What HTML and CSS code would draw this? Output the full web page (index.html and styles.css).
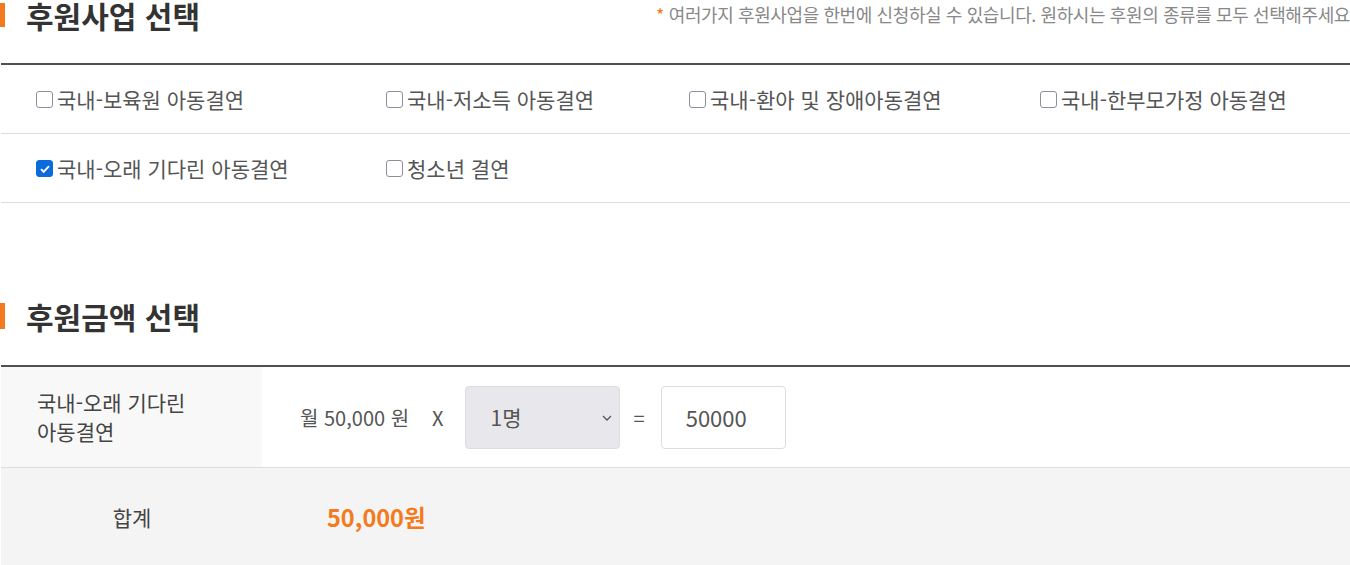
FILE: index.html
```html
<!DOCTYPE html>
<html lang="ko">
<head>
    <meta charset="UTF-8">
    <meta name="viewport" content="width=device-width, initial-scale=1.0">
    <title>후원 신청</title>
    <link rel="stylesheet" href="styles.css">
</head>
<body>
    <!-- 후원사업 선택 -->
    <div class="section-head">
        <h2 class="section-title">후원사업 선택</h2>
        <p class="section-note"><span class="star">*</span> 여러가지 후원사업을 한번에 신청하실 수 있습니다. 원하시는 후원의 종류를 모두 선택해주세요</p>
    </div>
    <div class="program-list">
        <div class="program-row">
            <label class="program"><input type="checkbox">국내-보육원 아동결연</label>
            <label class="program"><input type="checkbox">국내-저소득 아동결연</label>
            <label class="program"><input type="checkbox">국내-환아 및 장애아동결연</label>
            <label class="program"><input type="checkbox">국내-한부모가정 아동결연</label>
        </div>
        <div class="program-row">
            <label class="program"><input type="checkbox" checked>국내-오래 기다린 아동결연</label>
            <label class="program"><input type="checkbox">청소년 결연</label>
        </div>
    </div>

    <!-- 후원금액 선택 -->
    <div class="section-head amount-head">
        <h2 class="section-title">후원금액 선택</h2>
    </div>
    <div class="amount-table">
        <div class="amount-row">
            <div class="amount-name">국내-오래 기다린<br>아동결연</div>
            <div class="amount-calc">
                <span class="unit-price">월 50,000 원</span>
                <span class="op op-times">X</span>
                <span class="select-wrap">
                    <select class="count-select">
                        <option>1명</option>
                        <option>2명</option>
                        <option>3명</option>
                    </select>
                    <svg class="select-arrow" width="10" height="6" viewBox="0 0 10 6"><path d="M1 1l4 4 4-4" fill="none" stroke="#555" stroke-width="1.3"/></svg>
                </span>
                <span class="op op-equals">=</span>
                <input class="amount-input" type="text" value="50000">
            </div>
        </div>
        <div class="total-row">
            <div class="total-label">합계</div>
            <div class="total-value">50,000원</div>
        </div>
    </div>
</body>
</html>
```

FILE: styles.css
```css
body {
    --orange: #f47a20;
    margin: 0;
    font-family: "Noto Sans CJK KR", "Noto Sans", sans-serif;
    color: #555;
    background: #fff;
    overflow: hidden;
}
.section-head {
    display: flex;
    align-items: flex-start;
    justify-content: space-between;
    height: 63px;
    border-bottom: 2px solid #505050;
    margin-left: 1px;
}
.section-title {
    position: relative;
    margin: 0;
    padding-left: 25px;
    font-size: 30px;
    font-weight: 700;
    line-height: 30px;
    color: #333;
}
.section-title::before {
    content: "";
    position: absolute;
    left: -1px;
    top: 3px;
    width: 5px;
    height: 24px;
    background: var(--orange);
}
.section-note {
    margin: 2px 0 0;
    font-size: 18px;
    line-height: 24px;
    color: #888;
    letter-spacing: -0.4px;
    white-space: nowrap;
}
.star {
    color: var(--orange);
}
.program-list {
    margin-left: 1px;
}
.program-row {
    display: grid;
    grid-template-columns: 350px 303px 351px 1fr;
    height: 68px;
    align-items: center;
    padding-left: 35px;
    border-bottom: 1px solid #ddd;
}
.program {
    display: flex;
    align-items: center;
    font-size: 21px;
    color: #555;
    cursor: pointer;
}
.program input {
    appearance: none;
    flex: none;
    width: 17px;
    height: 17px;
    margin: 1px 4px 0 0;
    border: 1px solid #8f8f9d;
    border-radius: 3px;
    background: #fff;
}
.program input:checked {
    border-color: #0b6bdc;
    background: #0b6bdc url("data:image/svg+xml,%3Csvg xmlns='http://www.w3.org/2000/svg' viewBox='0 0 16 16'%3E%3Cpath d='M3.5 8.2l3 3 6-6.4' fill='none' stroke='%23fff' stroke-width='2.2'/%3E%3C/svg%3E") center / 14px no-repeat;
}
.amount-head {
    margin-top: 98px;
    height: 64px;
}
.amount-head .section-title::before {
    top: 2px;
    height: 26px;
}
.amount-table {
    margin-left: 1px;
}
.amount-row {
    display: flex;
    height: 100px;
    border-bottom: 1px solid #ddd;
}
.amount-name {
    width: 225px;
    padding-left: 36px;
    background: #f8f8f8;
    display: flex;
    align-items: center;
    font-size: 21px;
    line-height: 29px;
    color: #444;
}
.amount-calc {
    display: flex;
    align-items: center;
    padding-left: 38px;
    font-size: 20px;
    color: #555;
}
.op-times {
    margin: 0 21px 0 23px;
}
.op-equals {
    margin: 0 16px 0 14px;
}
.select-wrap {
    position: relative;
    display: flex;
}
.count-select {
    appearance: none;
    width: 155px;
    height: 63px;
    padding: 0 25px;
    font-family: inherit;
    font-size: 21px;
    color: #555;
    background: #e8e8ec;
    border: 1px solid #ddd;
    border-radius: 4px;
}
.select-arrow {
    position: absolute;
    right: 8px;
    top: 29px;
    pointer-events: none;
}
.amount-input {
    width: 99px;
    height: 61px;
    padding: 0 0 0 24px;
    font-family: inherit;
    font-size: 22px;
    color: #555;
    border: 1px solid #ddd;
    border-radius: 4px;
}
.total-row {
    display: flex;
    align-items: center;
    height: 97px;
    background: #f4f4f4;
}
.total-label {
    width: 262px;
    text-align: center;
    font-size: 21px;
    color: #444;
}
.total-value {
    padding-left: 64px;
    font-size: 23.5px;
    font-weight: 700;
    color: var(--orange);
}
```
